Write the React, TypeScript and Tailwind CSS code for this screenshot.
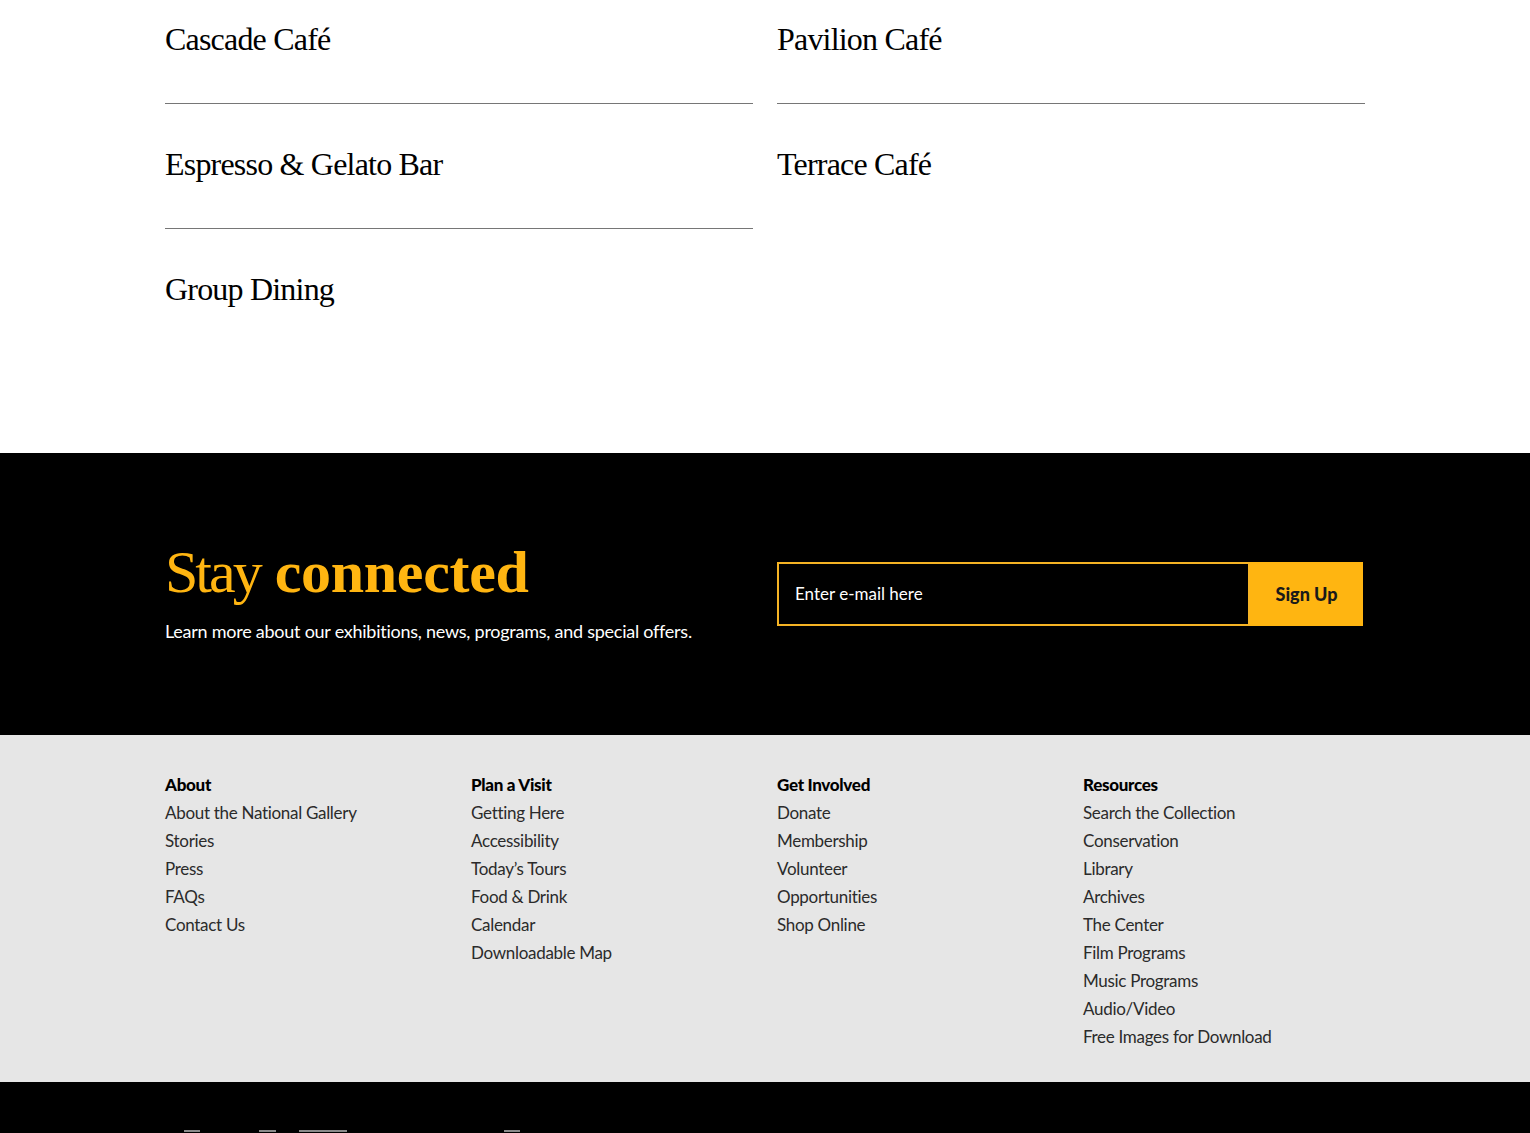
const DINING = [
  { name: "Cascade Café", line: true },
  { name: "Pavilion Café", line: true },
  { name: "Espresso & Gelato Bar", line: true },
  { name: "Terrace Café", line: false },
  { name: "Group Dining", line: false },
];

const FOOTER = [
  {
    title: "About",
    links: ["About the National Gallery", "Stories", "Press", "FAQs", "Contact Us"],
  },
  {
    title: "Plan a Visit",
    links: ["Getting Here", "Accessibility", "Today’s Tours", "Food & Drink", "Calendar", "Downloadable Map"],
  },
  {
    title: "Get Involved",
    links: ["Donate", "Membership", "Volunteer", "Opportunities", "Shop Online"],
  },
  {
    title: "Resources",
    links: [
      "Search the Collection",
      "Conservation",
      "Library",
      "Archives",
      "The Center",
      "Film Programs",
      "Music Programs",
      "Audio/Video",
      "Free Images for Download",
    ],
  },
];

const serif = "font-['Liberation_Serif',serif]";
const sans = "font-['Lato',sans-serif]";

export default function App() {
  return (
    <div className="min-h-screen bg-white overflow-hidden">
      {/* Dining list */}
      <section className="pb-[99px]">
        <div className="mx-auto w-[1200px] -mt-[21px] grid grid-cols-2 gap-x-6">
          {DINING.map((d) => (
            <div
              key={d.name}
              className={`pt-[40px] pb-[44px] ${d.line ? "border-b border-[#767676]" : "border-b border-transparent"}`}
            >
              <h3 className={`${serif} text-[32px] leading-[40px] tracking-[-0.8px] text-black`}>{d.name}</h3>
            </div>
          ))}
        </div>
      </section>

      {/* Newsletter */}
      <section className="bg-black pt-[83px] pb-[90px]">
        <div className="mx-auto w-[1200px] grid grid-cols-2 gap-x-6">
          <div>
            <h2 className={`${serif} text-[60px] leading-[72px] text-[#ffb511]`}>
              <span className="tracking-[-3px]">Stay</span> <span className="font-bold tracking-[-0.3px]">connected</span>
            </h2>
            <p className={`${sans} mt-[9px] text-[18px] leading-[28px] text-white tracking-[-0.25px]`}>
              Learn more about our exhibitions, news, programs, and special offers.
            </p>
          </div>
          <form className="mt-[26px] flex h-16 w-[586px]" onSubmit={(e) => e.preventDefault()}>
            <input
              type="email"
              placeholder="Enter e-mail here"
              className={`${sans} flex-1 border-2 border-[#f5b324] bg-black px-4 text-[17px] text-white placeholder:text-white outline-none`}
            />
            <button
              type="submit"
              className={`${sans} w-[113px] bg-[#ffb511] text-[18px] font-black text-[#1a1a1a]`}
            >
              Sign Up
            </button>
          </form>
        </div>
      </section>

      {/* Footer links */}
      <footer className="bg-[#e6e6e6] pt-9 pb-[31px]">
        <div className="mx-auto w-[1200px] grid grid-cols-4 gap-x-6">
          {FOOTER.map((col) => (
            <div key={col.title} className={`${sans} text-[17px] leading-[28px] tracking-[-0.3px]`}>
              <h4 className="font-black text-black">{col.title}</h4>
              <ul>
                {col.links.map((l) => (
                  <li key={l} className="text-[#2b2b2b]">
                    <a href="#">{l}</a>
                  </li>
                ))}
              </ul>
            </div>
          ))}
        </div>
      </footer>

      {/* Bottom bar (logo tops cut off) */}
      <div className="bg-black h-[60px] pt-[48px]">
        <div className="relative h-[2px]">
          <div className="absolute left-[184px] w-[16px] h-[2px] bg-[#8a8a8a]" />
          <div className="absolute left-[259px] w-[17px] h-[2px] bg-[#8a8a8a]" />
          <div className="absolute left-[299px] w-[48px] h-[2px] bg-[#8a8a8a]" />
          <div className="absolute left-[504px] w-[16px] h-[2px] bg-[#8a8a8a]" />
        </div>
      </div>
    </div>
  );
}
